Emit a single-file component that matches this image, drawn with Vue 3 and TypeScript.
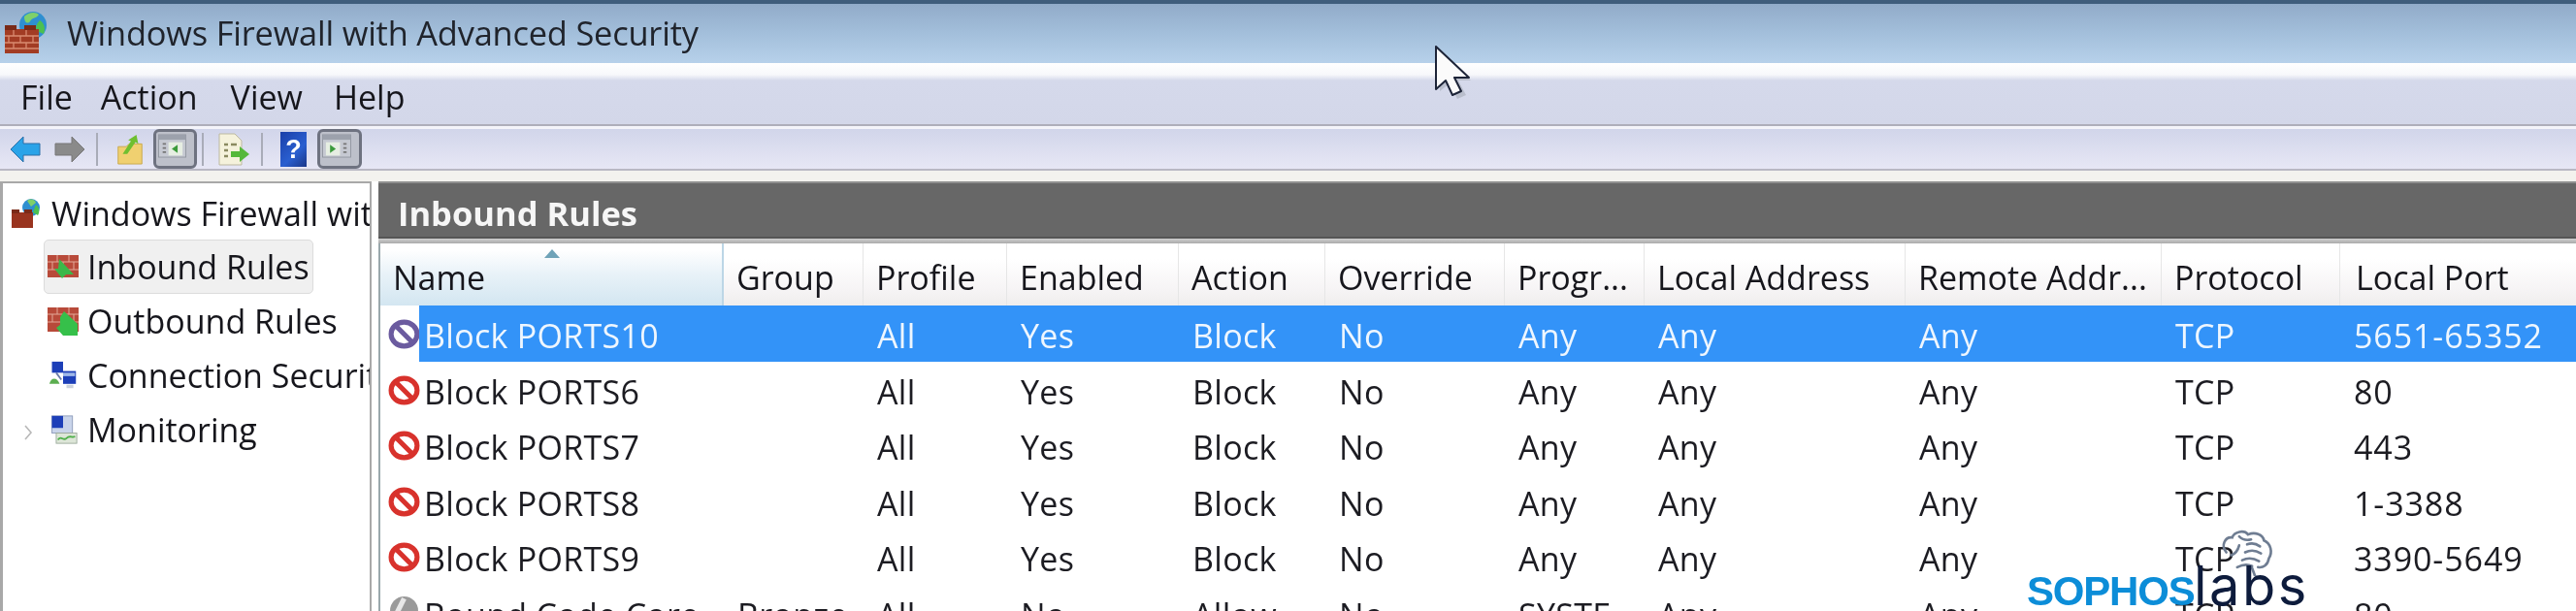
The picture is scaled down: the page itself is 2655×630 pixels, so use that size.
<script setup lang="ts">
interface Row {
  name: string;
  group: string;
  profile: string;
  enabled: string;
  action: string;
  override: string;
  program: string;
  localAddr: string;
  remoteAddr: string;
  protocol: string;
  port: string;
  kind: 'selected' | 'block' | 'allow';
}
const menus: string[] = ['File', 'Action', 'View', 'Help'];
const columns: string[] = ['Group', 'Profile', 'Enabled', 'Action', 'Override', 'Progr...', 'Local Address', 'Remote Addr...', 'Protocol', 'Local Port'];
const mk = (name: string, port: string, kind: Row['kind']): Row => ({
  name, group: '', profile: 'All', enabled: 'Yes', action: 'Block', override: 'No', program: 'Any',
  localAddr: 'Any', remoteAddr: 'Any', protocol: 'TCP', port, kind,
});
const rows: Row[] = [
  mk('Block PORTS10', '5651-65352', 'selected'),
  mk('Block PORTS6', '80', 'block'),
  mk('Block PORTS7', '443', 'block'),
  mk('Block PORTS8', '1-3388', 'block'),
  mk('Block PORTS9', '3390-5649', 'block'),
  { name: 'Bound Code Core', group: 'Bronze', profile: 'All', enabled: 'No', action: 'Allow', override: 'No', program: 'SYSTE', localAddr: 'Any', remoteAddr: 'Any', protocol: 'TCP', port: '80', kind: 'allow' },
];
const cells = (r: Row): string[] => [r.name, r.group, r.profile, r.enabled, r.action, r.override, r.program, r.localAddr, r.remoteAddr, r.protocol, r.port];
</script>

<template>
  <div class="win">
    <header class="title">
      <svg class="title-icon" viewBox="0 0 46 44">
        <circle cx="29" cy="15" r="14" fill="#2f8fd0" />
        <path d="M20 6c5-5 12-5 15-2-2 4-7 3-9 7-2 3-6 2-6-5z" fill="#7fd06a" />
        <path d="M36 10c5 3 6 9 4 14l-7-3c-2-4 0-8 3-11z" fill="#4cc050" />
        <rect x="0" y="19" width="35" height="25" fill="#a23c24" />
        <path d="M0 26h35M0 33h35M0 39h35M9 19v7M22 19v7M4 26v7M16 26v7M29 26v7M9 33v6M22 33v6" stroke="#d98a70" stroke-width="1.3" fill="none" />
        <rect x="0" y="15" width="12" height="5" fill="#7a2a18" />
        <rect x="20" y="15" width="12" height="5" fill="#7a2a18" />
      </svg>
      <span class="title-text">Windows Firewall with Advanced Security</span>
    </header>

    <nav class="menubar">
      <span v-for="m in menus" :key="m" class="menu" :class="'menu-' + m.toLowerCase()">{{ m }}</span>
    </nav>

    <div class="toolbar">
      <svg class="tb back" viewBox="0 0 32 30"><path d="M1 15 14 2v7h17v12H14v7z" fill="#2aa3e8" stroke="#2a6fa8" stroke-width="1" /></svg>
      <svg class="tb fwd" viewBox="0 0 33 30"><path d="M32 15 19 2v7H2v12h17v7z" fill="#8a8a8a" stroke="#777" stroke-width="1" /></svg>
      <i class="tsep sep1"></i>
      <svg class="tb folder" viewBox="0 0 28 34">
        <path d="M1 14h9l3-3h14v22H1z" fill="#f0d070" stroke="#c9a84a" />
        <path d="M6 22 15 8l-3-1 9-6 2 10-3-2-9 13z" fill="#6fbf30" />
      </svg>
      <div class="tbtn tbtn1">
        <svg viewBox="0 0 45 41"><rect x="6" y="7" width="33" height="27" fill="#c6c9d2" stroke="#8d929c" /><rect x="6" y="7" width="33" height="6" fill="#9ca1ac" /><path d="M11 18h4M11 23h4M11 28h4" stroke="#777" stroke-width="2" /><rect x="18" y="16" width="17" height="16" fill="#e6eee2" /><path d="M29 19v10l-7-5z" fill="#3b9a3b" /></svg>
      </div>
      <i class="tsep sep2"></i>
      <svg class="tb doc" viewBox="0 0 33 34">
        <path d="M1 1h16l7 7v25H1z" fill="#f5f2dc" stroke="#bdb9a0" />
        <path d="M6 12h4M13 12h6M6 18h4M6 24h4" stroke="#8a8a60" stroke-width="2.5" />
        <path d="M13 19h9v-5l10 8-10 8v-5h-9z" fill="#55b83a" />
      </svg>
      <i class="tsep sep3"></i>
      <div class="help">?</div>
      <div class="tbtn tbtn2">
        <svg viewBox="0 0 46 41"><rect x="6" y="7" width="34" height="27" fill="#c6c9d2" stroke="#8d929c" /><rect x="6" y="7" width="34" height="6" fill="#9ca1ac" /><path d="M31 18h4M31 23h4M31 28h4" stroke="#777" stroke-width="2" /><rect x="10" y="16" width="17" height="16" fill="#e6eee2" /><path d="M15 19v10l7-5z" fill="#3b9a3b" /></svg>
      </div>
    </div>
    <div class="strip"></div>

    <main class="body">
      <aside class="tree">
        <div class="node root">
          <svg class="root-icon" viewBox="0 0 32 30">
            <circle cx="21" cy="9" r="9" fill="#2f8fd0" />
            <path d="M17 2c4-3 8-1 9 2l-5 4z" fill="#7fd06a" />
            <path d="M26 6c4 3 4 8 2 11l-5-3z" fill="#4cc050" />
            <path d="M1 14h22v16H1z" fill="#99341f" />
            <rect x="1" y="11" width="8" height="4" fill="#7a2a18" />
            <rect x="14" y="11" width="8" height="4" fill="#7a2a18" />
          </svg>
          <span>Windows Firewall with Advanced Security</span>
        </div>
        <div class="node child active">
          <svg class="leaf" viewBox="0 0 32 26">
            <rect y="1" width="32" height="23" fill="#b84a3a" /><path d="M0 8h32M0 16h32M10 1v7M22 1v7M5 8v8M16 8v8M27 8v8" stroke="#e3a898" fill="none" />
            <path d="M12 5 27 21h-8l-4 4-8-10 4 0z" fill="#3cb84a" />
          </svg>
          <span>Inbound Rules</span>
        </div>
        <div class="node child">
          <svg class="leaf" viewBox="0 0 32 30">
            <rect y="1" width="32" height="25" fill="#b84a3a" /><path d="M0 8h32M0 16h32M10 1v7M22 1v7M5 8v8M16 8v8M27 8v8" stroke="#e3a898" fill="none" />
            <path d="M17 5 31 18v12H16l-7-8 4-3 0-8z" fill="#36c04a" />
          </svg>
          <span>Outbound Rules</span>
        </div>
        <div class="node child">
          <svg class="leaf" viewBox="0 0 32 34">
            <rect x="3" y="1" width="13" height="13" fill="#1d3fb8" /><rect x="16" y="12" width="15" height="15" fill="#1d3fb8" />
            <path d="M16 14h14v4H16z" fill="#9fb8e8" /><path d="M0 27c2-8 9-8 12 0z" fill="#5cae50" /><path d="M8 14l6 8" stroke="#6a7aa8" stroke-width="2" /><rect x="20" y="28" width="8" height="4" fill="#ccd2dc" />
          </svg>
          <span>Connection Security Rules</span>
        </div>
        <div class="node child">
          <svg class="chev" viewBox="0 0 10 16"><path d="M2 1l6 7-6 7" fill="none" stroke="#b8b8b8" stroke-width="1.6" /></svg>
          <svg class="leaf" viewBox="0 0 32 34">
            <rect x="3" y="1" width="24" height="20" fill="#c9d4ea" stroke="#8a98b8" /><rect x="3" y="1" width="13" height="14" fill="#1d3fb8" />
            <rect x="8" y="21" width="24" height="12" fill="#dde6d8" stroke="#9aa89a" /><path d="M10 29c4-6 6 2 10-2s6 0 10-2" stroke="#4faf4a" stroke-width="2" fill="none" />
          </svg>
          <span>Monitoring</span>
        </div>
      </aside>

      <section class="pane">
        <h2 class="pane-head">Inbound Rules</h2>
        <div class="pane-rule"></div>
        <div class="list">
          <div class="grid head">
            <div class="hc name-h">
              Name
              <svg class="sort" viewBox="0 0 16 9"><path d="M8 0l8 9H0z" fill="#6fa3b8" /></svg>
            </div>
            <div v-for="c in columns" :key="c" class="hc">{{ c }}</div>
          </div>
          <div v-for="r in rows" :key="r.name" class="grid row" :class="r.kind">
            <div class="ico">
              <svg v-if="r.kind !== 'allow'" viewBox="0 0 32 30">
                <ellipse cx="16" cy="15" rx="13" ry="12" fill="#fff" stroke="currentColor" stroke-width="5" />
                <path d="M7 6l18 18" stroke="currentColor" stroke-width="5" />
              </svg>
              <svg v-else viewBox="0 0 32 30">
                <circle cx="16" cy="15" r="14" fill="#9a9a9a" />
                <path d="M16 3l-7 14" stroke="#e8e8e8" stroke-width="5" />
              </svg>
            </div>
            <div v-for="(c, i) in cells(r)" :key="i" class="c">{{ c }}</div>
          </div>
        </div>
      </section>
    </main>

    <svg class="cursor" viewBox="0 0 42 56">
      <path d="M4 2v42l10-8 8 16 9-4-8-15h13z" fill="#9aa0a8" opacity=".45" transform="translate(2 3)" />
      <path d="M2 1v44l10-9 7 15 9-4-7-14h15z" fill="#fbfbfb" stroke="#1d2438" stroke-width="2" stroke-linejoin="round" />
    </svg>

    <div class="logo">
      <svg class="brain" viewBox="0 0 58 48">
        <g fill="none" stroke="#6f7d92" stroke-width="2.6" stroke-linecap="round">
          <path d="M9 24C3 17 8 8 15 9c2-6 12-8 16-3 7-3 15 0 16 6 7 3 9 12 5 18-1 7-6 10-11 9" />
          <path d="M14 27c5-2 7-6 8-10M22 8c3 3 8 4 12 3M30 16c5-2 9-1 13 2M28 24c6-3 11-2 16 1M25 32c6-3 12-2 17 1M20 39c6-3 11-3 15-1" />
          <path d="M38 48l-3-8" />
        </g>
      </svg>
      <span class="sophos">SOPHOS</span><span class="labs">labs</span>
    </div>
  </div>
</template>

<style>
html, body { margin: 0; padding: 0; background: #fff; }
</style>

<style scoped>
.win {
  position: relative;
  width: 2655px;
  height: 630px;
  overflow: hidden;
  display: flex;
  flex-direction: column;
  background: #fff;
  color: #16161c;
  font-family: "Open Sans", "Noto Sans", sans-serif;
  filter: blur(0.55px);
}
.title {
  flex: 0 0 65px;
  box-sizing: border-box;
  display: flex;
  align-items: center;
  gap: 18px;
  padding: 0 0 3px 5px;
  border-top: 4px solid #3f5d7c;
  background: linear-gradient(#91abc9 0%, #a3bfdb 50%, #b7d1ea 100%);
}
.title-icon { width: 46px; height: 44px; flex: none; }
.title-text { font-size: 34.4px; color: #20242c; letter-spacing: -0.2px; white-space: nowrap; }

.menubar {
  flex: 0 0 65px;
  box-sizing: border-box;
  display: flex;
  align-items: center;
  padding: 7px 0 0 21px;
  border-bottom: 2px solid #aeaeba;
  background: linear-gradient(#ffffff 0, #f7f8fb 12px, #d5d9eb 18px, #d3d7e9 100%);
  font-size: 34px;
}
.menu-action { margin-left: 29px; }
.menu-view { margin-left: 34px; }
.menu-help { margin-left: 32px; }

.toolbar {
  flex: 0 0 46px;
  box-sizing: border-box;
  display: flex;
  align-items: center;
  padding-left: 10px;
  border-top: 3px solid #f4f4fa;
  border-bottom: 2px solid #b9b8c4;
  background: linear-gradient(#d1d5ea, #e7e7f5);
}
.tb { flex: none; display: block; }
.back { width: 32px; height: 30px; }
.fwd { width: 33px; height: 30px; margin-left: 13px; }
.tsep { flex: none; width: 2px; height: 34px; background: #a9acb8; }
.sep1 { margin-left: 11px; }
.folder { width: 28px; height: 32px; margin-left: 19px; }
.tbtn {
  flex: none;
  box-sizing: border-box;
  height: 41px;
  border: 3px solid #6e7280;
  border-radius: 6px;
  background: #bdc0ca;
  display: flex;
}
.tbtn svg { width: 100%; height: 100%; display: block; margin: -3px; flex: none; }
.tbtn1 { width: 45px; margin-left: 10px; }
.sep2 { margin-left: 5px; }
.doc { width: 33px; height: 34px; margin-left: 15px; }
.sep3 { margin-left: 11px; }
.help {
  flex: none;
  width: 27px;
  height: 36px;
  margin-left: 18px;
  background: linear-gradient(135deg, #1a3fa8, #2a5fd0 60%, #1a3688);
  color: #fff;
  font: 700 27px/36px "Liberation Sans", sans-serif;
  text-align: center;
}
.tbtn2 { width: 46px; margin-left: 11px; }

.strip { flex: 0 0 11px; background: #f3f2ee; }

.body { flex: 1; display: flex; min-height: 0; gap: 7px; }
.tree {
  flex: 0 0 383px;
  box-sizing: border-box;
  border-left: 3px solid #a8a8a8;
  border-right: 2px solid #a8a8a8;
  border-top: 2px solid #a8a8a8;
  overflow: hidden;
  background: #fff;
  padding-top: 10px;
  font-size: 34px;
  white-space: nowrap;
}
.node { display: flex; align-items: center; height: 56px; }
.root { padding-left: 8px; height: 42px; gap: 10px; margin-bottom: 6px; }
.root-icon { width: 32px; height: 30px; flex: none; }
.child { position: relative; margin-left: 42px; padding-left: 3px; width: 278px; box-sizing: border-box; gap: 9px; border: 1px solid transparent; border-radius: 5px; }
.active { background: #f0f0f0; border-color: #dcdcdc; }
.leaf { width: 32px; height: 30px; flex: none; }
.chev { position: absolute; left: -22px; top: 22px; width: 10px; height: 16px; }

.pane { flex: 1; min-width: 0; display: flex; flex-direction: column; overflow: hidden; }
.pane-head {
  flex: 0 0 59px;
  margin: 0;
  box-sizing: border-box;
  padding-left: 20px;
  background: #676767;
  border-top: 2px solid #8f8f8f;
  border-bottom: 2px solid #555;
  color: #f6f6f6;
  font-size: 34.5px;
  font-weight: 700;
  line-height: 62px;
  white-space: nowrap;
  overflow: hidden;
}
.pane-rule { flex: 0 0 5px; background: linear-gradient(#cfcfcf, #aaa); }
.list { border-left: 2px solid #9aa8ac; }
.grid {
  display: grid;
  grid-template-columns: 40px 314px 144px 148px 177px 151px 185px 144px 269px 264px 184px 1fr;
}
.head {
  height: 64px;
  font-size: 34px;
  background: linear-gradient(#fff 25%, #f6f4f5 75%, #efeded);
}
.hc {
  box-sizing: border-box;
  padding-left: 13px;
  line-height: 70px;
  border-right: 1px solid #e6e6e6;
  white-space: nowrap;
  overflow: hidden;
}
.head .hc:last-child { border-right: 0; padding-left: 16px; }
.name-h {
  grid-column: 1 / span 2;
  position: relative;
  background: linear-gradient(#fff 10%, #e8f2f8 50%, #d3e6f1);
  border-right: 2px solid #bcd6e6;
}
.sort { position: absolute; left: 169px; top: 6px; width: 16px; height: 9px; }
.row { height: 57.6px; font-size: 34px; line-height: 63px; letter-spacing: 0.3px; color: #1c1c22; }
.c { padding-left: 14px; white-space: nowrap; overflow: hidden; }
.c:nth-child(2) { padding-left: 5px; }
.c:last-child { letter-spacing: 0.9px; }
.ico { padding: 14px 0 0 8px; color: #d8322c; }
.ico svg { display: block; width: 33px; height: 31px; }
.selected .ico { color: #6b5b9f; }
.selected .c { background: #3393f8; color: #eef6fe; }
.allow .ico { padding-top: 11px; }

.cursor { position: absolute; left: 1478px; top: 47px; width: 42px; height: 56px; }

.logo { position: absolute; left: 2089px; top: 545px; width: 295px; height: 85px; }
.brain { position: absolute; left: 196px; top: 0; width: 60px; height: 49px; }
.sophos {
  position: absolute;
  left: 0;
  bottom: 3px;
  font: 700 42px/34px "Liberation Sans", sans-serif;
  letter-spacing: -1.2px;
  color: #0c8dd8;
}
.labs {
  position: absolute;
  left: 172px;
  bottom: 3px;
  font: 400 56px/46px Inter, sans-serif;
  letter-spacing: 2.5px;
  color: #0d1b3c;
}
</style>
